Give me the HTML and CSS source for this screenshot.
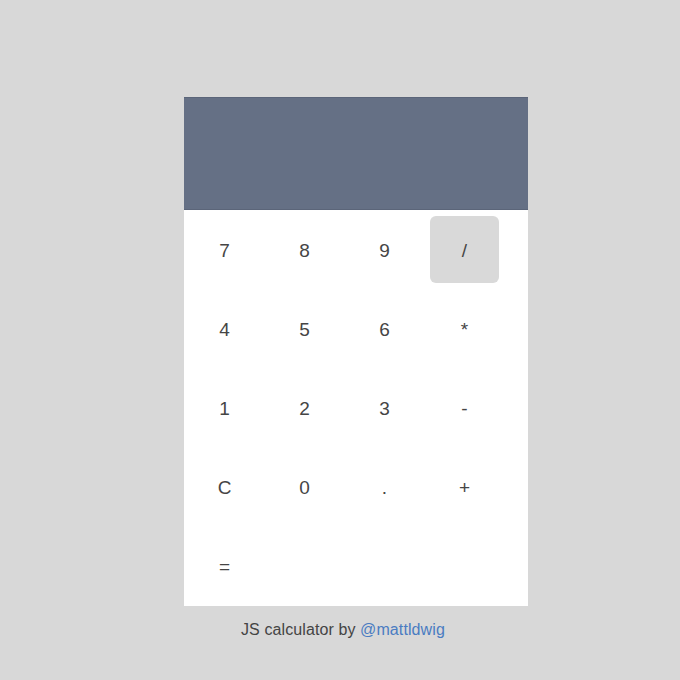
FILE: index.html
```html
<!DOCTYPE html>
<html>
<head>
<meta charset="utf-8">
<link rel="stylesheet" href="styles.css">
</head>
<body>
<div class="page">
  <div class="calc">
    <div class="display"></div>
    <div class="keys">
      <div class="key">7</div>
      <div class="key">8</div>
      <div class="key">9</div>
      <div class="key active">/</div>
      <div class="key">4</div>
      <div class="key">5</div>
      <div class="key">6</div>
      <div class="key">*</div>
      <div class="key">1</div>
      <div class="key">2</div>
      <div class="key">3</div>
      <div class="key">-</div>
      <div class="key">C</div>
      <div class="key">0</div>
      <div class="key">.</div>
      <div class="key">+</div>
      <div class="key">=</div>
    </div>
  </div>
  <p class="credit">JS calculator by <a href="#">@mattldwig</a></p>
</div>
</body>
</html>
```
FILE: styles.css
```css
html, body {
  margin: 0;
  padding: 0;
  background: #d8d8d8;
  font-family: "Liberation Sans", Arial, sans-serif;
}
.page {
  padding-top: 97px;
  padding-left: 184px;
  width: 344px;
}
.calc {
  width: 344px;
  background: #ffffff;
}
.display {
  height: 111px;
  background: #657085;
  border-top: 1px solid #5b6579;
  border-bottom: 1px solid #5b6579;
}
.keys {
  display: grid;
  grid-template-columns: repeat(4, 80px);
  grid-auto-rows: 79px;
  padding-bottom: 1px;
}
.key {
  display: flex;
  align-items: center;
  justify-content: center;
  font-size: 19px;
  color: #454545;
  margin: 6px 5px 6px 6px;
  padding-top: 2px;
  border-radius: 6px;
}
.key.active {
  background: #d9d9d9;
}
.credit {
  margin: 15px 0 0;
  padding-left: 57px;
  font-size: 16px;
  letter-spacing: 0.1px;
  color: #444;
}
.credit a {
  color: #4a7cc2;
  text-decoration: none;
}
```
